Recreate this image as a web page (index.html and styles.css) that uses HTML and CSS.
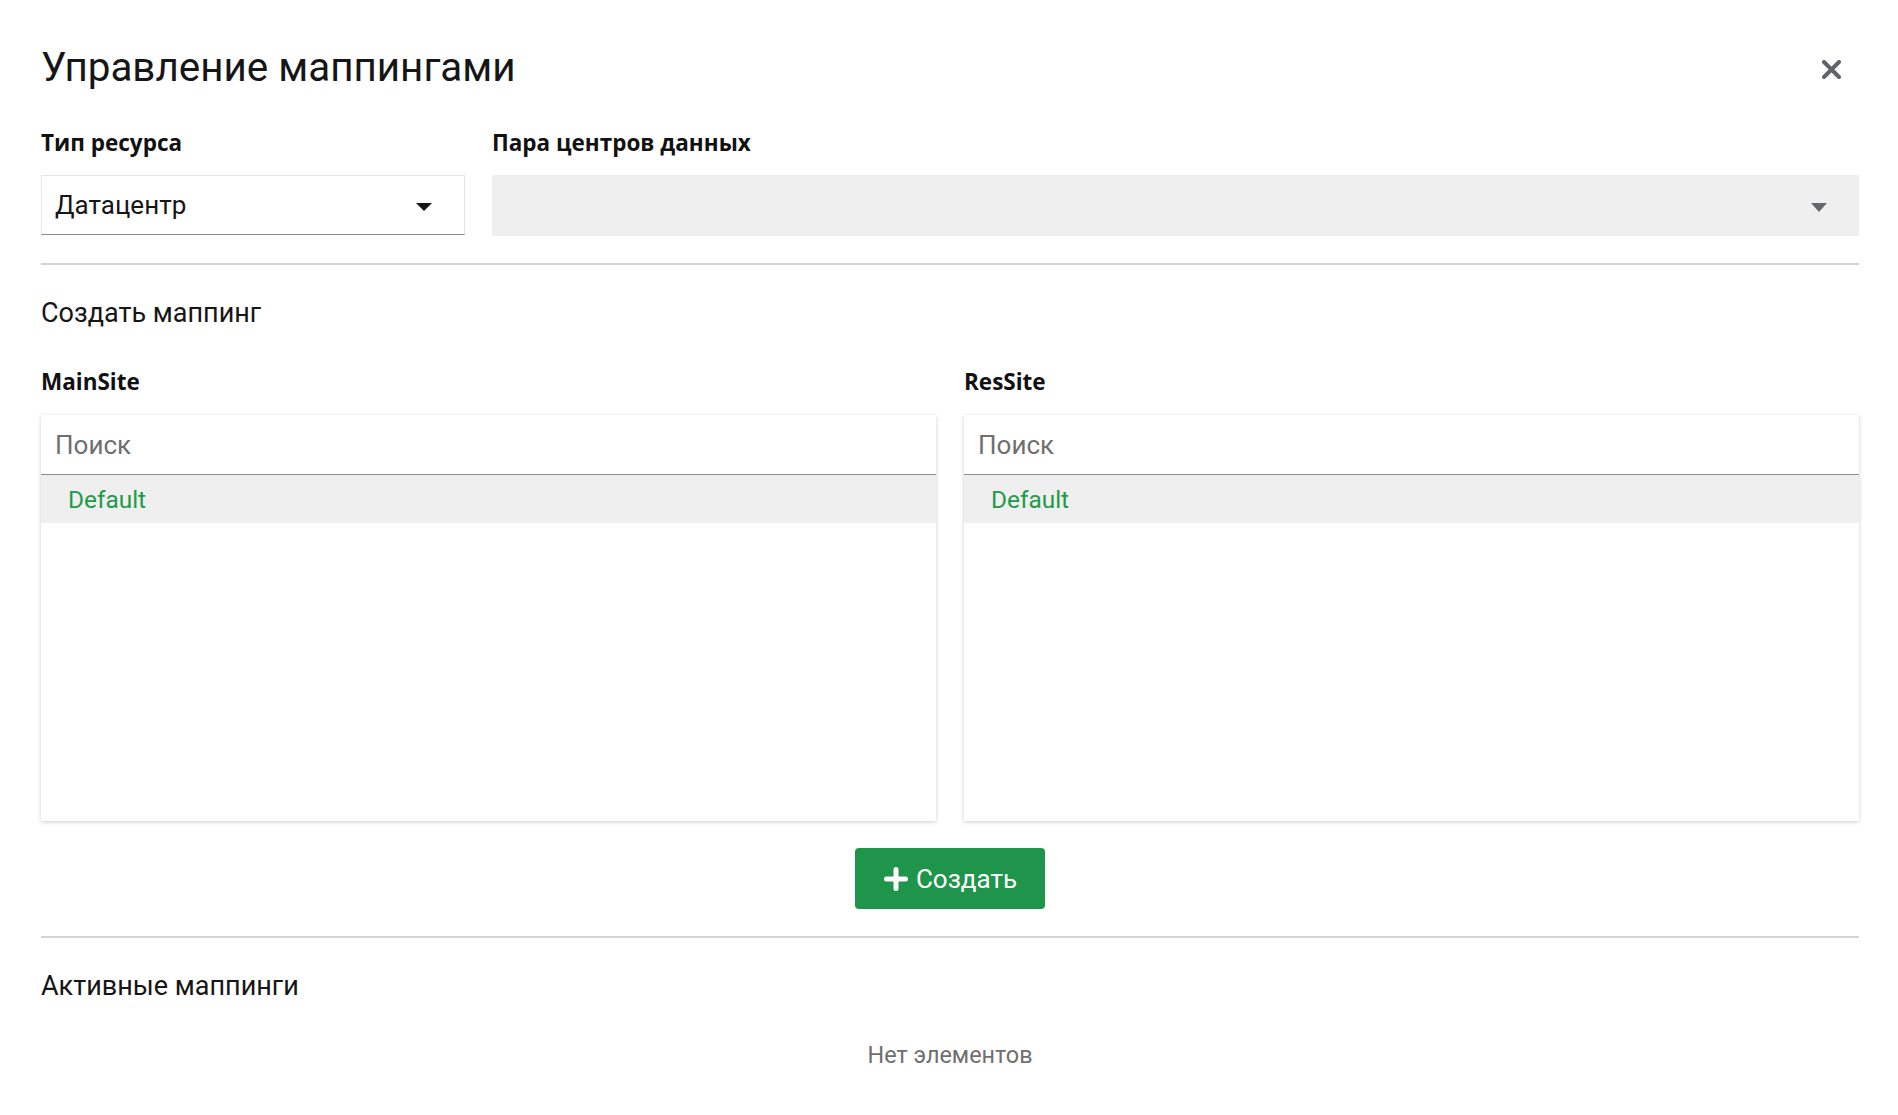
FILE: index.html
```html
<!DOCTYPE html>
<html lang="ru">
<head>
<meta charset="utf-8">
<title>Управление маппингами</title>
<link rel="stylesheet" href="styles.css">
</head>
<body>
<div class="dialog">
  <header class="dialog-header">
    <h1 class="dialog-title">Управление маппингами</h1>
    <button class="close-btn" type="button" aria-label="Закрыть">
      <svg width="19" height="19" viewBox="0 0 19 19"><path d="M2 2 L17 17 M17 2 L2 17" stroke="#606368" stroke-width="4" stroke-linecap="round" fill="none"/></svg>
    </button>
  </header>

  <div class="fields">
    <div class="field">
      <div class="field-label">Тип ресурса</div>
      <div class="select select-outlined">
        <span class="select-value">Датацентр</span>
        <span class="caret caret-dark"></span>
      </div>
    </div>
    <div class="field">
      <div class="field-label">Пара центров данных</div>
      <div class="select select-filled">
        <span class="select-value"></span>
        <span class="caret caret-gray"></span>
      </div>
    </div>
  </div>

  <hr class="divider">

  <h2 class="section-title">Создать маппинг</h2>

  <div class="lists">
    <div class="list-col">
      <div class="field-label">MainSite</div>
      <div class="list-panel">
        <div class="list-search">Поиск</div>
        <div class="list-item">Default</div>
      </div>
    </div>
    <div class="list-col">
      <div class="field-label">ResSite</div>
      <div class="list-panel">
        <div class="list-search">Поиск</div>
        <div class="list-item">Default</div>
      </div>
    </div>
  </div>

  <div class="actions">
    <button class="btn-primary" type="button">
      <svg width="24" height="24" viewBox="0 0 24 24"><path d="M12 2.5 V21.5 M2.5 12 H21.5" stroke="#fff" stroke-width="5" stroke-linecap="round" fill="none"/></svg>
      <span>Создать</span>
    </button>
  </div>

  <hr class="divider">

  <h2 class="section-title">Активные маппинги</h2>

  <div class="empty">Нет элементов</div>
</div>
</body>
</html>
```
FILE: styles.css
```css
* { box-sizing: border-box; }

body {
  margin: 0;
  background: #ffffff;
  font-family: Roboto, "Liberation Sans", sans-serif;
  color: #161616;
}

.dialog {
  padding: 44px 39px 0 41px;
}

.dialog-header {
  display: flex;
  align-items: center;
  justify-content: space-between;
}

.dialog-title {
  margin: 0;
  font-size: 40.4px;
  line-height: 48px;
  font-weight: 400;
  color: #161616;
}

.close-btn {
  border: 0;
  background: transparent;
  padding: 0;
  margin: 3px 18px 0 0;
  width: 19px;
  height: 19px;
  display: flex;
}

.fields {
  display: grid;
  grid-template-columns: 424px 1fr;
  column-gap: 27px;
  margin-top: 38px;
}

.field-label {
  font-family: "Open Sans", Roboto, sans-serif;
  font-weight: 700;
  font-size: 22.5px;
  line-height: 26px;
  color: #111111;
  margin-bottom: 19px;
}

.select {
  height: 60px;
  display: flex;
  align-items: center;
  justify-content: space-between;
  padding: 0 32px 0 13px;
}

.select-outlined {
  border: 1px solid #e6e6e6;
  border-bottom: 1px solid #8d8d8d;
}

.select-filled {
  background: #efefef;
  height: 61px;
}

.select-value {
  font-size: 26px;
  line-height: 32px;
  color: #161616;
}

.caret {
  width: 0;
  height: 0;
  border-left: 8px solid transparent;
  border-right: 8px solid transparent;
  margin-top: 4px;
}

.caret-dark { border-top: 8px solid #161616; }

.caret-gray {
  border-left-width: 8.5px;
  border-right-width: 8.5px;
  border-top: 9px solid #63676b;
}

.divider {
  margin: 0;
  border: 0;
  height: 2px;
  background: #d4d4d4;
}

.fields + .divider { margin-top: 27px; }

.section-title {
  margin: 32px 0 0;
  font-size: 27px;
  line-height: 32px;
  font-weight: 400;
  color: #161616;
}

.lists {
  display: grid;
  grid-template-columns: 1fr 1fr;
  column-gap: 28px;
  margin-top: 40px;
}

.lists .field-label { margin-bottom: 20px; }

.list-panel {
  height: 406px;
  background: #fff;
  box-shadow: 0 1px 4px rgba(0, 0, 0, 0.2);
}

.list-search {
  height: 60px;
  display: flex;
  align-items: center;
  padding: 0 13px 0 14px;
  font-size: 26px;
  color: #6f6f6f;
  border-bottom: 1px solid #8d8d8d;
}

.list-item {
  height: 48px;
  display: flex;
  align-items: center;
  padding-left: 27px;
  background: #efefef;
  font-size: 24.4px;
  color: #1f9a4b;
}

.actions {
  display: flex;
  justify-content: center;
  margin: 27px 0 27px;
}

.btn-primary {
  display: flex;
  align-items: center;
  gap: 8px;
  height: 61px;
  padding: 0 28px 0 29px;
  border: 0;
  border-radius: 4px;
  background: #1e954b;
  color: #ffffff;
  font-family: Roboto, "Liberation Sans", sans-serif;
  font-size: 26px;
}

.empty {
  margin-top: 39px;
  text-align: center;
  font-size: 23.4px;
  line-height: 28px;
  color: #6f6f6f;
}
```
